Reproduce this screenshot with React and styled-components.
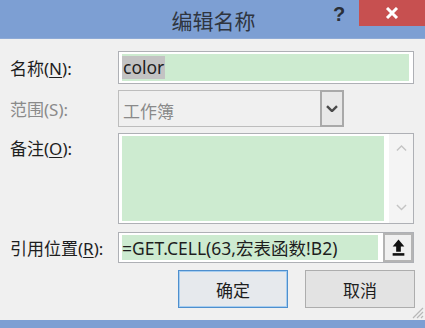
import React from 'react';
import styled, { createGlobalStyle } from 'styled-components';

const GlobalStyle = createGlobalStyle`
	html, body {
		margin: 0;
		padding: 0;
		background: #f0f0f0;
	}
	body {
		font-family: "Noto Sans", "Noto Sans CJK SC", sans-serif;
	}
`;

const Window = styled.div`
	width: 425px;
	height: 328px;
	display: flex;
	flex-direction: column;
	background: #f0f0f0;
	position: relative;
	overflow: hidden;
`;

const TitleBar = styled.div`
	height: 38px;
	flex: none;
	background: #7d9fd3;
	border-bottom: 1px solid #8eaad6;
	position: relative;
	display: flex;
	align-items: center;
	justify-content: center;
`;

const Title = styled.div`
	font-family: "Noto Sans CJK SC", sans-serif;
	font-size: 21px;
	color: #2f3540;
	margin-top: 2px;
	margin-left: 2px;
`;

const HelpBtn = styled.div`
	position: absolute;
	left: 331px;
	top: 0;
	width: 16px;
	height: 28px;
	display: flex;
	align-items: center;
	justify-content: center;
	font-family: "Liberation Sans", sans-serif;
	font-weight: bold;
	font-size: 20px;
	color: #2a2f38;
`;

const CloseBtn = styled.div`
	position: absolute;
	left: 359px;
	top: 0;
	width: 66px;
	height: 26px;
	background: #c75050;
	display: flex;
	align-items: center;
	justify-content: center;
`;

const Body = styled.div`
	flex: 1;
	padding: 12px 11px 0 10px;
	display: flex;
	flex-direction: column;
`;

const Row = styled.div`
	display: flex;
	align-items: ${p => (p.$top ? 'flex-start' : 'center')};
	margin-top: ${p => p.$gap || 0}px;
`;

const Label = styled.div`
	width: 108px;
	flex: none;
	font-size: 17px;
	color: ${p => (p.$disabled ? '#8a8a8a' : '#1e1e1e')};
	padding-top: ${p => p.$pt || 0}px;
	white-space: nowrap;
	u {
		text-decoration: underline;
		text-underline-offset: 2px;
	}
`;

const TextBox = styled.div`
	flex: 1;
	height: ${p => p.$h}px;
	box-sizing: border-box;
	border: 1px solid #aeb0b5;
	background: #fff;
	padding: 2px 4px 2px 3px;
	display: flex;
	gap: 5px;
`;

const Fill = styled.div`
	flex: 1;
	background: #cdebd0;
	display: flex;
	align-items: center;
	font-size: 17.5px;
	color: #1e1e1e;
	white-space: nowrap;
	overflow: hidden;
`;

const Selected = styled.span`
	background: #c3c3c3;
	padding: 0 1px;
	line-height: 23px;
`;

const Combo = styled.div`
	width: 226px;
	height: 37px;
	box-sizing: border-box;
	border: 1px solid #bdbdbd;
	background: #f0f0f0;
	display: flex;
`;

const ComboText = styled.div`
	flex: 1;
	display: flex;
	align-items: center;
	padding-left: 4px;
	padding-top: 3px;
	font-size: 17px;
	color: #8a8a8a;
`;

const DropBtn = styled.div`
	width: 24px;
	margin: -1px -1px -1px 0;
	box-sizing: border-box;
	border: 2px solid #a9a9a9;
	background: #e8e8e8;
	display: flex;
	align-items: center;
	justify-content: center;
`;

const ScrollBar = styled.div`
	width: 24px;
	margin: -2px -4px -2px 0;
	background: #f4f4f4;
	display: flex;
	flex-direction: column;
	justify-content: space-between;
	align-items: center;
	padding: 11px 0 12px;
`;

const PickBtn = styled.div`
	width: 30px;
	margin: -2px -4px -2px 0;
	box-sizing: border-box;
	border: 2px solid #b4b4b4;
	background: #f0f0f0;
	display: flex;
	align-items: center;
	justify-content: center;
`;

const Buttons = styled.div`
	display: flex;
	justify-content: flex-end;
	gap: 17px;
	margin-top: 7px;
`;

const Button = styled.div`
	width: 110px;
	height: 38px;
	box-sizing: border-box;
	border: 1px solid ${p => (p.$primary ? '#4e8fce' : '#adadad')};
	box-shadow: ${p => (p.$primary ? 'inset 0 0 0 1px #a6cdf0' : 'none')};
	background: ${p => (p.$primary ? '#e6e9ed' : '#e3e3e3')};
	display: flex;
	align-items: center;
	justify-content: center;
	font-size: 17px;
	color: #1e1e1e;
	margin-right: ${p => (p.$last ? -1 : 0)}px;
`;

const BottomEdge = styled.div`
	height: 8px;
	flex: none;
	background: #7d9fd3;
	margin-top: 12px;
`;

const Grip = styled.svg`
	position: absolute;
	right: 1px;
	bottom: 9px;
`;

const Chevron = ({ up, color, w = 12, sw = 2 }) => (
	<svg width={w} height={w * 0.6} viewBox="0 0 12 7">
		<path
			d={up ? 'M1 6 L6 1 L11 6' : 'M1 1 L6 6 L11 1'}
			fill="none"
			stroke={color}
			strokeWidth={sw}
		/>
	</svg>
);

export default function App() {
	return (
		<>
			<GlobalStyle />
			<Window>
				<TitleBar>
					<Title>编辑名称</Title>
					<HelpBtn>?</HelpBtn>
					<CloseBtn>
						<svg width="14" height="12" viewBox="0 0 14 12">
							<path d="M2 1 L12 11 M12 1 L2 11" stroke="#fff" strokeWidth="3" />
						</svg>
					</CloseBtn>
				</TitleBar>
				<Body>
					<Row>
						<Label>
							名称(<u>N</u>):
						</Label>
						<TextBox $h={33}>
							<Fill>
								<Selected>color</Selected>
							</Fill>
						</TextBox>
					</Row>
					<Row $gap={6}>
						<Label $disabled>范围(S):</Label>
						<Combo>
							<ComboText>工作簿</ComboText>
							<DropBtn>
								<Chevron color="#4a4a4a" w={12} sw={2.4} />
							</DropBtn>
						</Combo>
					</Row>
					<Row $gap={6} $top>
						<Label $pt={2}>
							备注(<u>O</u>):
						</Label>
						<TextBox $h={91}>
							<Fill />
							<ScrollBar>
								<Chevron up color="#c4c4c4" w={11} sw={1.5} />
								<Chevron color="#c4c4c4" w={11} sw={1.5} />
							</ScrollBar>
						</TextBox>
					</Row>
					<Row $gap={8}>
						<Label>
							引用位置(<u>R</u>):
						</Label>
						<TextBox $h={31}>
							<Fill>=GET.CELL(63,宏表函数!B2)</Fill>
							<PickBtn>
								<svg width="13" height="17" viewBox="0 0 12 16">
									<path d="M6 0.5 L11.5 7 L8.2 7 L8.2 12 L3.8 12 L3.8 7 L0.5 7 Z" fill="#111" />
									<rect x="0.5" y="13.3" width="11" height="2.4" fill="#111" />
								</svg>
							</PickBtn>
						</TextBox>
					</Row>
					<Buttons>
						<Button $primary>确定</Button>
						<Button $last>取消</Button>
					</Buttons>
				</Body>
				<BottomEdge />
				<Grip width="14" height="14" viewBox="0 0 14 14">
					<path d="M13 3 L3 13 M13 7 L7 13 M13 11 L11 13" stroke="#b8b8b8" strokeWidth="1.2" />
				</Grip>
			</Window>
		</>
	);
}
